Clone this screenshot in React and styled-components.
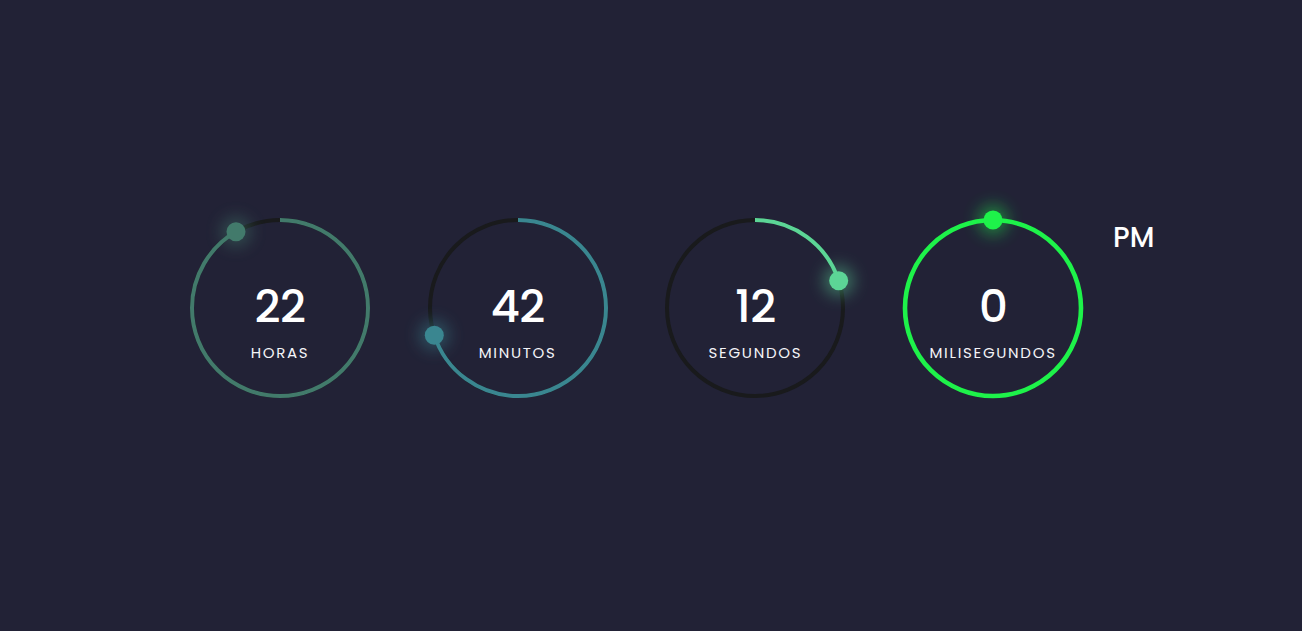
import React from "react";
import styled, { createGlobalStyle } from "styled-components";

const Global = createGlobalStyle`
  html, body { margin: 0; padding: 0; background: #222236; }
  body { font-family: "Poppins", "Inter", "Noto Sans", sans-serif; color: #fff; }
`;

const Page = styled.main`
  width: 1302px;
  height: 631px;
  background: #222236;
  display: flex;
  align-items: flex-start;
  padding: 216px 0 0 188px;
  box-sizing: border-box;
`;

const Row = styled.div`
  display: flex;
  gap: 53.7px;
  align-items: flex-start;
`;

const Dial = styled.div`
  position: relative;
  width: 184px;
  height: 184px;
  display: flex;
  flex-direction: column;
  align-items: center;
  justify-content: center;
`;

const Ring = styled.svg`
  position: absolute;
  left: -10px;
  top: -10px;
  width: 204px;
  height: 204px;
  overflow: visible;
`;

const Value = styled.div`
  position: relative;
  font-size: 45px;
  font-weight: 500;
  line-height: 1;
  margin-top: 27px;
  letter-spacing: -0.5px;
`;

const Label = styled.div`
  position: relative;
  margin-top: 16px;
  font-size: 15px;
  font-weight: 400;
  letter-spacing: 1.7px;
  line-height: 1;
  color: #f4f4f8;
`;

const Meridiem = styled.div`
  margin-left: 28px;
  margin-top: 8px;
  font-size: 28px;
  font-weight: 500;
  line-height: 1;
`;

const R = 88;
const C = 102;

function Progress({ frac, color, id, width }) {
  const circ = 2 * Math.PI * R;
  const ang = frac * 2 * Math.PI;
  const dx = C + R * Math.sin(ang);
  const dy = C - R * Math.cos(ang);
  return (
    <Ring viewBox="0 0 204 204">
      <defs>
        <filter id={id} x="-200%" y="-200%" width="500%" height="500%">
          <feGaussianBlur stdDeviation="8" />
        </filter>
      </defs>
      <circle cx={C} cy={C} r={R} fill="none" stroke="#191a1c" strokeWidth="4" />
      <circle
        cx={C}
        cy={C}
        r={R}
        fill="none"
        stroke={color}
        strokeWidth={width}
        strokeDasharray={`${circ * frac} ${circ}`}
        transform={`rotate(-90 ${C} ${C})`}
      />
      <circle cx={dx} cy={dy} r="15" fill={color} opacity="0.45" filter={`url(#${id})`} />
      <circle cx={dx} cy={dy} r="9.5" fill={color} />
    </Ring>
  );
}

const items = [
  { v: "22", l: "HORAS", f: 22 / 24, c: "#427a6b", w: 4 },
  { v: "42", l: "MINUTOS", f: 42 / 60, c: "#3a8690", w: 4 },
  { v: "12", l: "SEGUNDOS", f: 12 / 60, c: "#5cd596", w: 4 },
  { v: "0", l: "MILISEGUNDOS", f: 1, c: "#1ef24a", w: 4.6 },
];

export default function App() {
  return (
    <>
      <Global />
      <Page>
        <Row>
          {items.map((it, i) => (
            <Dial key={it.l}>
              <Progress frac={it.f} color={it.c} id={`g${i}`} width={it.w} />
              <Value>{it.v}</Value>
              <Label>{it.l}</Label>
            </Dial>
          ))}
        </Row>
        <Meridiem>PM</Meridiem>
      </Page>
    </>
  );
}
